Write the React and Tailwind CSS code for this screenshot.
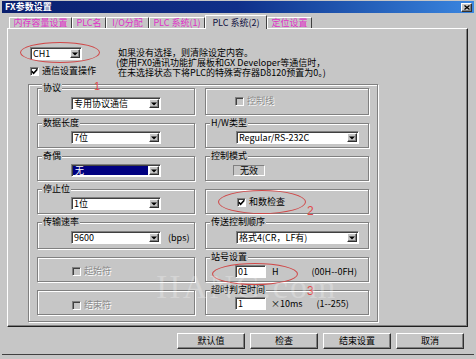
import React from "react";

const sunken =
  "border border-t-[#808080] border-l-[#808080] border-r-white border-b-white shadow-[inset_1px_1px_0_#404040]";
const raised =
  "border border-t-white border-l-white border-r-[#303030] border-b-[#303030] shadow-[inset_-1px_-1px_0_#808080]";

function Arrow() {
  return (
    <svg width="6" height="4" viewBox="0 0 6 4">
      <path d="M0 0.5h6L3 3.5z" fill="#000" />
    </svg>
  );
}

function Select({ className = "", children, highlight }) {
  return (
    <div className={"flex h-[13px] bg-white " + sunken + " " + className}>
      <div
        className={
          "flex-1 flex items-center pl-[2px] whitespace-nowrap " +
          (highlight ? "bg-[#000080] text-white m-[1px] pl-[1px]" : "")
        }
      >
        {children}
      </div>
      <div className={"w-[10px] my-[1px] mr-[1px] bg-[#c6c6c6] flex items-center justify-center " + raised}>
        <Arrow />
      </div>
    </div>
  );
}

function Check({ checked, disabled }) {
  return (
    <div
      className={
        "w-[9px] h-[9px] shrink-0 flex items-center justify-center " +
        (disabled ? "bg-[#c6c6c6] " : "bg-white ") +
        sunken
      }
    >
      {checked && (
        <svg width="7" height="7" viewBox="0 0 7 7">
          <path d="M0.8 3.2 L2.6 5.2 L6.3 1.2" stroke="#000" strokeWidth="1.6" fill="none" />
        </svg>
      )}
    </div>
  );
}

function Group({ label, children, className = "" }) {
  return (
    <div
      className={
        "relative border border-[#808080] shadow-[inset_1px_1px_0_#fff,1px_1px_0_#fff] " + className
      }
    >
      {label && (
        <span className="absolute -top-[6px] left-[4px] px-[1px] bg-[#c6c6c6] leading-[10px] whitespace-nowrap">
          {label}
        </span>
      )}
      {children}
    </div>
  );
}

const disabledText = "text-[#8a8a8a] [text-shadow:1px_1px_0_#ffffff]";

function Tab({ children, w, active, color }) {
  return (
    <div
      className={
        "flex items-center justify-center whitespace-nowrap border-t border-l border-t-white border-l-white border-r border-r-[#404040] " +
        w +
        " " +
        (active
          ? "h-[14px] bg-[#c6c6c6] relative z-10 -mb-[1px] text-[#101040]"
          : "h-[11px] " + color)
      }
    >
      {children}
    </div>
  );
}

function Button({ children }) {
  return (
    <div className={"w-[68px] h-[16px] flex items-center justify-center bg-[#c6c6c6] " + raised}>
      {children}
    </div>
  );
}

export default function App() {
  const pink = "text-[#e030c8]";
  return (
    <div className="relative w-[476px] h-[359px] overflow-hidden bg-[#c6c6c6] text-black text-[9px] leading-[10px] font-['Noto_Sans_CJK_SC','Noto_Sans',sans-serif] flex flex-col">
      {/* title bar */}
      <div className="mt-[1px] mx-[2px] h-[12px] flex items-center justify-between bg-linear-to-r from-[#0a1f6e] via-[#10308a] to-[#3a86e0]">
        <span className="pl-[3px] text-white font-bold">FX参数设置</span>
        <div className={"mr-[2px] w-[11px] h-[9px] bg-[#c6c6c6] flex items-center justify-center " + raised}>
          <svg width="6" height="5" viewBox="0 0 6 5">
            <path d="M0.5 0.5L5.5 4.5M5.5 0.5L0.5 4.5" stroke="#000" strokeWidth="1.3" />
          </svg>
        </div>
      </div>

      {/* tabs */}
      <div className="mt-[2px] h-[13px] pl-[9px] flex items-end">
        <Tab w="w-[63px]" color={pink}>内存容量设置</Tab>
        <Tab w="w-[34px]" color={pink}>PLC名</Tab>
        <Tab w="w-[43px]" color={pink}>I/O分配</Tab>
        <Tab w="w-[56px]" color={pink}>PLC 系统(1)</Tab>
        <Tab w="w-[62px]" active>PLC 系统(2)</Tab>
        <Tab w="w-[45px]" color={pink}>定位设置</Tab>
      </div>

      {/* panel */}
      <div className="ml-[7px] w-[461px] h-[299px] border border-t-white border-l-white border-r-[#202020] border-b-[#202020] shadow-[inset_-1px_-1px_0_#808080] flex flex-col">
        {/* top area */}
        <div className="h-[55px] flex">
          <div className="w-[110px] pl-[22px] pt-[18px] flex flex-col">
            <Select className="w-[52px]">CH1</Select>
            <div className="mt-[6px] flex items-center gap-[3px]">
              <Check checked />
              <span>通信设置操作</span>
            </div>
          </div>
          <div className="pt-[19px] flex flex-col whitespace-nowrap">
            <span>如果没有选择，则清除设定内容。</span>
            <span className="-ml-[2px]">(使用FX0通讯功能扩展板和GX Developer等通信时，</span>
            <span>在未选择状态下将PLC的特殊寄存器D8120预置为0。)</span>
          </div>
        </div>

        {/* big frame */}
        <div className="ml-[20px] w-[350px] h-[238px] border border-[#808080] shadow-[inset_1px_1px_0_#fff,1px_1px_0_#fff] pl-[8px] pt-[3px]">
          <div className="grid grid-cols-[158px_164px] gap-x-[10px] gap-y-[8px] grid-rows-[27px_25px_25px_25px_27px_25px_25px]">
            <Group label="协议" className="pl-[33px] pt-[8px]">
              <Select className="w-[90px]">专用协议通信</Select>
            </Group>
            <Group className="pl-[29px] pt-[7px]">
              <div className="flex items-center gap-[3px]">
                <Check disabled />
                <span className={disabledText}>控制线</span>
              </div>
            </Group>

            <Group label="数据长度" className="pl-[33px] pt-[7px]">
              <Select className="w-[90px]">7位</Select>
            </Group>
            <Group label="H/W类型" className="pl-[30px] pt-[7px]">
              <Select className="w-[123px]">Regular/RS-232C</Select>
            </Group>

            <Group label="奇偶" className="pl-[33px] pt-[7px]">
              <Select className="w-[90px]" highlight>
                无
              </Select>
            </Group>
            <Group label="控制模式" className="pl-[27px] pt-[8px]">
              <div className="w-[32px] h-[11px] flex items-center justify-center bg-[#c6c6c6] border border-t-[#808080] border-l-[#808080] border-r-white border-b-white">
                无效
              </div>
            </Group>

            <Group label="停止位" className="pl-[33px] pt-[7px]">
              <Select className="w-[90px]">1位</Select>
            </Group>
            <Group className="pl-[31px] pt-[7px]">
              <div className="flex items-center gap-[3px]">
                <Check checked />
                <span>和数检查</span>
              </div>
            </Group>

            <Group label="传输速率" className="pl-[33px] pt-[8px]">
              <div className="flex items-center">
                <Select className="w-[90px]">9600</Select>
                <span className="ml-[7px]">(bps)</span>
              </div>
            </Group>
            <Group label="传送控制顺序" className="pl-[30px] pt-[8px]">
              <Select className="w-[123px]">格式4(CR，LF有)</Select>
            </Group>

            <Group className="pl-[34px] pt-[8px]">
              <div className="flex items-center gap-[3px]">
                <Check disabled />
                <span className={disabledText}>起始符</span>
              </div>
            </Group>
            <Group label="站号设置" className="pl-[29px] pt-[7px]">
              <div className="flex items-center">
                <div className={"w-[31px] h-[13px] bg-white pl-[2px] flex items-center " + sunken}>01</div>
                <span className="ml-[6px]">H</span>
                <span className="ml-[33px]">(00H--0FH)</span>
              </div>
            </Group>

            <Group className="pl-[34px] pt-[9px]">
              <div className="flex items-center gap-[3px]">
                <Check disabled />
                <span className={disabledText}>结束符</span>
              </div>
            </Group>
            <Group label="超时判定时间" className="pl-[29px] pt-[6px]">
              <div className="flex items-center">
                <div className={"w-[31px] h-[13px] bg-white pl-[2px] flex items-center " + sunken}>1</div>
                <span className="ml-[5px]">×10ms</span>
                <span className="ml-[14px]">(1--255)</span>
              </div>
            </Group>
          </div>
        </div>
      </div>

      {/* buttons */}
      <div className="mt-[6px] pr-[12px] flex justify-end gap-[5px]">
        <Button>默认值</Button>
        <Button>检查</Button>
        <Button>结束设置</Button>
        <Button>取消</Button>
      </div>
      <div className="mt-[5px] mx-[2px] h-[1px] bg-[#404040]" />

      {/* annotations */}
      <div className="absolute left-[20px] top-[42px] w-[80px] h-[21px] rounded-[50%] border border-[#d04848]" />
      <div className="absolute left-[218px] top-[190px] w-[88px] h-[24px] rounded-[50%] border border-[#d04848]" />
      <div className="absolute left-[212px] top-[263px] w-[86px] h-[22px] rounded-[50%] border border-[#d04848]" />
      <span className="absolute left-[94px] top-[81px] text-[11px] leading-[11px] text-[#e04848] font-['Liberation_Sans',sans-serif]">1</span>
      <span className="absolute left-[307px] top-[205px] text-[12px] leading-[12px] text-[#e04848] font-['Liberation_Sans',sans-serif]">2</span>
      <span className="absolute left-[307px] top-[285px] text-[12px] leading-[12px] text-[#e04848] font-['Liberation_Sans',sans-serif]">3</span>

      {/* watermark */}
      <span className="absolute left-[156px] top-[270px] text-[34px] leading-[34px] text-white/25 font-['Liberation_Serif',serif] tracking-[2px] pointer-events-none">
        IIANG.com
      </span>
    </div>
  );
}
